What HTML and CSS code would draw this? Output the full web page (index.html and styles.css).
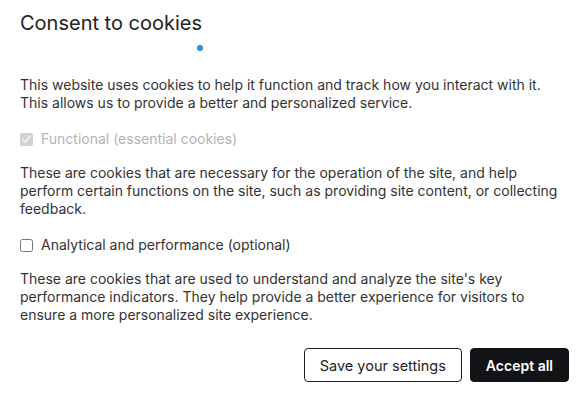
FILE: index.html
```html
<!DOCTYPE html>
<html>
<head>
<meta charset="utf-8">
<link rel="stylesheet" href="styles.css">
</head>
<body>
<div class="dialog">
  <h1 class="title">Consent to cookies</h1>
  <div class="dot-row"><span class="dot"></span></div>
  <p class="text">This website uses cookies to help it function and track how you interact with it. This allows us to provide a better and personalized service.</p>
  <label class="option disabled"><input type="checkbox" checked disabled><span>Functional (essential cookies)</span></label>
  <p class="text">These are cookies that are necessary for the operation of the site, and help perform certain functions on the site, such as providing site content, or collecting feedback.</p>
  <label class="option"><input type="checkbox"><span>Analytical and performance (optional)</span></label>
  <p class="text">These are cookies that are used to understand and analyze the site's key performance indicators. They help provide a better experience for visitors to ensure a more personalized site experience.</p>
  <div class="actions">
    <button class="btn btn-outline">Save your settings</button>
    <button class="btn btn-dark">Accept all</button>
  </div>
</div>
</body>
</html>
```
FILE: styles.css
```css
html, body {
  margin: 0;
  background: #fff;
}
.dialog {
  padding: 10px 18px 0 20px;
  font-family: Inter, "Noto Sans", sans-serif;
  color: #333;
  font-size: 14px;
  line-height: 18px;
}
.title {
  margin: 0;
  font-size: 20px;
  font-weight: 400;
  line-height: 26px;
  color: #222;
}
.dot-row {
  height: 24px;
  padding-left: 177px;
  display: flex;
  align-items: center;
}
.dot {
  width: 6px;
  height: 6px;
  border-radius: 50%;
  background: #2d8cf0;
}
.text {
  margin: 16px 0 0;
}
.option {
  display: flex;
  align-items: center;
  margin-top: 18px;
  line-height: 18px;
}
.option input {
  margin: 0 8px 0 0;
  width: 13px;
  height: 13px;
}
.option.disabled span {
  color: #b3b3b3;
}
.actions {
  display: flex;
  justify-content: flex-end;
  gap: 8px;
  margin-top: 24px;
}
.btn {
  font-family: Inter, "Noto Sans", sans-serif;
  font-size: 14px;
  height: 34px;
  border-radius: 4px;
  padding: 0 16px;
  cursor: pointer;
}
.btn-outline {
  background: #fff;
  color: #222;
  border: 1px solid #222;
  font-size: 14.5px;
  padding: 0 15px;
}
.btn-dark {
  background: #111317;
  color: #fff;
  border: 1px solid #111317;
  font-weight: 600;
  padding: 0 15px;
}
```
